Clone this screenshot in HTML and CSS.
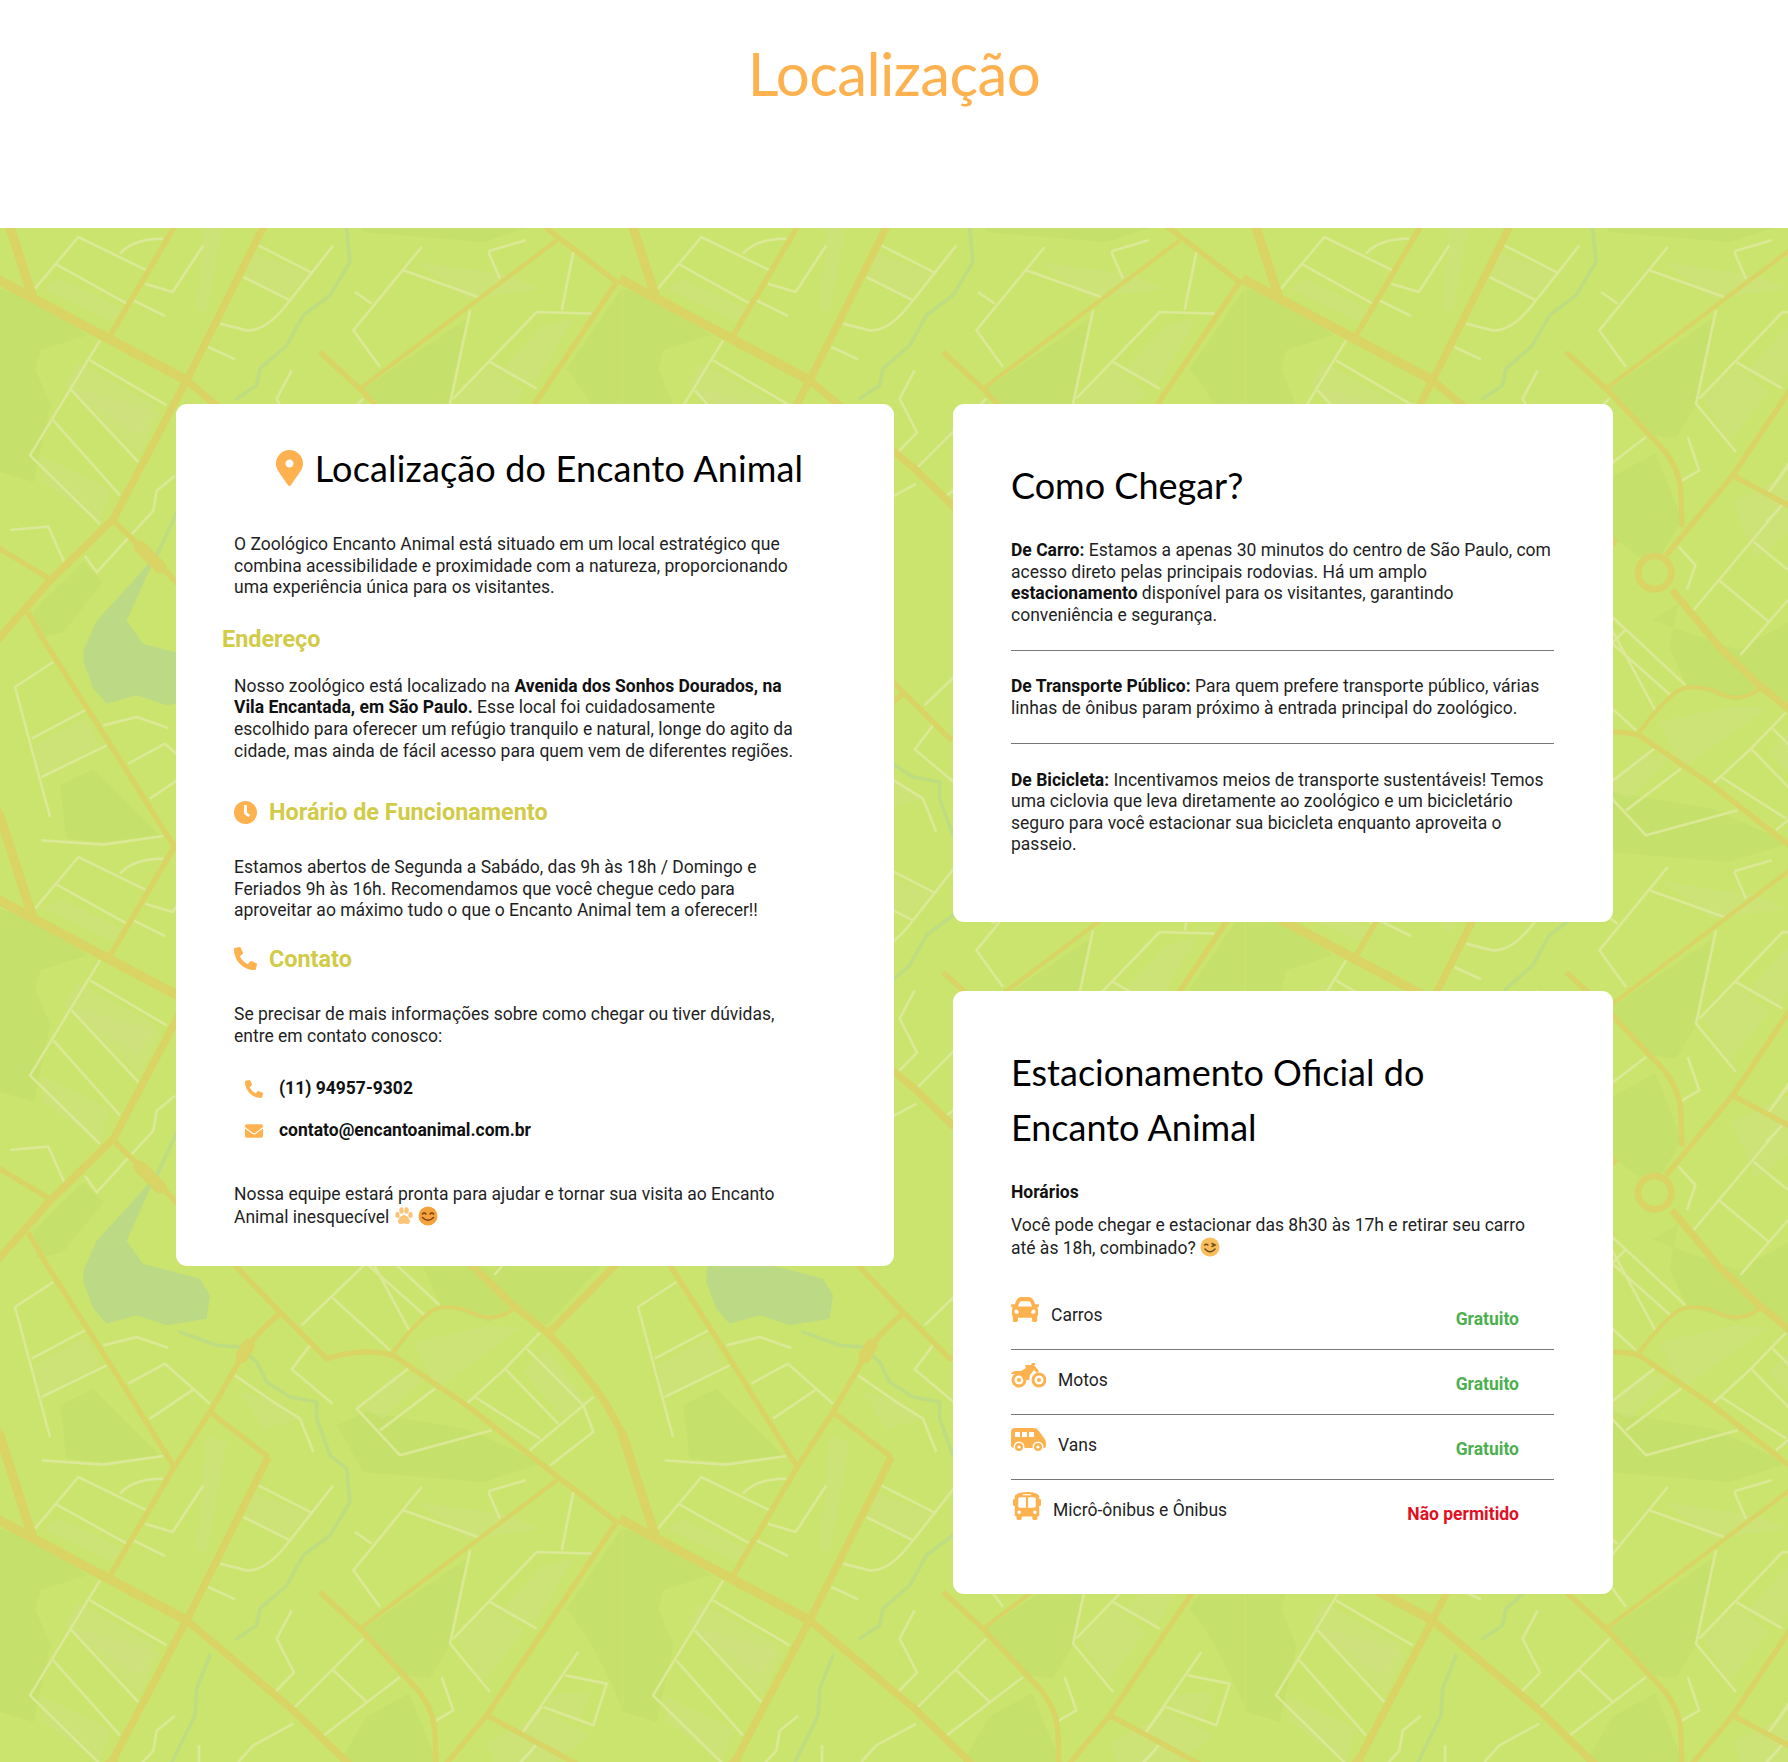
FILE: index.html
```html
<!DOCTYPE html>
<html lang="pt-BR">
<head>
<meta charset="utf-8">
<title>Localização</title>
<link rel="stylesheet" href="styles.css">
</head>
<body>
<header class="page-head"><h1>Localização</h1></header>
<main class="map-section">
<svg class="map" aria-hidden="true" width="100%" height="100%">
<defs>
<g id="parks">
<path class="park" d="M180 430L280 380L480 580L310 600L200 590Z"/>
<path class="park" d="M1700 1040L1865 800L1990 830L2130 940L1990 985L1975 1040L2020 1150L1970 1380L1870 1350Q1790 1150 1700 1040Z"/>
<path class="park" d="M1010 490L1100 450L1400 500L1600 590L1640 600L1450 660L1090 630Z"/>
<path class="park" d="M1090 1100L1400 890L1350 1150L1290 1250L1210 1240Z"/>
<path class="park" d="M1218 -66L1298 -116L1270 15L1320 130L1470 180L1540 130L1640 190L1800 15L1700 -100L1478 24Z"/>
<path class="park" d="M1020 1500L1098 1364L1228 1294L1308 1494L1248 1594L1178 1604L1098 1544Z"/>
<path class="park" d="M100 1766L250 1620L310 1680L190 1830L110 1850Z"/>
<path class="pale" d="M620 520L680 540L620 870L590 860Z"/>
<path class="pale" d="M100 310L255 225L300 310L125 400Z"/>
<path class="pale" d="M180 770L370 860L340 900L130 800Z"/>
<path class="pale" d="M230 1100L480 1170L420 1300L220 1120Z"/>
<path class="pale" d="M120 1300L330 1400L300 1500L130 1380Z"/>
<path class="pale" d="M1180 340L1280 340L1150 470L1090 440Z"/>
<path class="pale" d="M1240 240L1470 190L1560 200L1310 380Z"/>
<path class="pale" d="M1530 760L1620 800L1400 830L1250 720Z"/>
<path class="pale" d="M1500 1050L1630 910L1720 890L1600 1090Z"/>
<path class="pale" d="M1370 1130L1470 1030L1570 1110L1450 1260Z"/>
<path class="pale" d="M1640 260L1760 420L1690 470L1570 330Z"/>
<path class="pale" d="M2100 1020L2340 1150L2280 1240L2060 1090Z"/>
<path class="pale" d="M1460 1440L1640 1350L1770 1420L1530 1610Z"/>
<path class="pale" d="M760 690L930 755L850 830L735 770Z"/>
<path class="pale" d="M1640 1300L1770 1290L1740 1380L1650 1350Z"/>
<path class="pale" d="M820 410L900 470L790 500L720 390Z"/>
<path class="lake" d="M470 -264L400 -184L290 -64L250 26L250 60L280 140L320 185L410 160L500 190L620 170L630 100L600 50L528 31L430 6L380 -64Z"/>
<path class="stream" d="M540 210L650 250L720 255L770 300L800 360L870 405L950 420L950 470L990 580L1040 620L1050 720L990 820L910 880L860 970L780 1040L770 1090L710 1130"/>
<path class="stream" d="M630 1180L590 1280L585 1360L528 1476L470 1600"/>
<path class="seam" d="M1867 770V1350"/>
</g>
<g id="lights">
<path class="lane" d="M160 60L45 135L150 525M95 290L255 205M125 405L320 310M310 250L410 225L505 258M385 365L495 305L630 425M450 470L580 382M125 595L310 608L490 582M105 800L235 645L440 745M165 725L380 845M400 835L495 882M360 695Q400 650 490 650M610 670L518 810L435 785"/>
<path class="lane" d="M300 955L90 1300L300 1506M270 1015L500 1150M215 1105L415 1320M160 1195L360 1420M775 670L940 755M1000 670L870 835Q800 930 740 925L660 905M730 765L870 835M625 975L705 1012M705 340L820 420L900 470L940 570M930 250L875 322L998 425"/>
<path class="lane" d="M905 190L1098 4L1138 -36M995 105L1170 265M1098 4L1273 159M1098 -76L1318 129M1020 -180L1228 205M1225 320L1070 440L1200 580L1475 505M1305 380L1140 505M1265 675L1060 925L1140 1035M1210 745L1435 825M1065 810L1115 845M875 1045L830 1130L882 1232L825 1290M1090 1130L880 1340M1000 1225L1100 1320M1200 1245L965 1425M1325 1245L1360 1345L1300 1380"/>
<path class="lane" d="M1410 865L1350 1145L1470 1290M1360 1130L1610 870L1775 875M1470 1020L1610 1100M1720 690L1685 865M1465 690L1500 770M1465 688L1577 655M1400 425L1515 320L1620 212M1425 405L1620 530M1515 320L1675 485M1580 260L1750 430M1590 565L1780 405M1750 430L1780 510L1650 610M1735 1170L1565 1415M1695 1240L1820 1265L1780 1390L1630 1335M1600 1460L1560 1500"/>
<path class="lane" d="M525 1361L470 1406L460 1466L290 1651L255 1601M597 1450V1560M880 1385L760 1450L715 1500M30 1524L145 1514L195 1626M1626 1334L1573 1404M1608 1449L1343 1764M1523 1559L1626 1644M1418 1674L1568 1799M1626 1734L1483 1899M1298 1574L1348 1629L1323 1704"/>
</g>
<g id="roads">
<path class="road r-wide" d="M-10 770L100 830L325 950L560 1075"/>
<path class="road r-big" d="M560 1075L880 1345L1040 1500L1110 1565"/>
<path class="road r-mid" d="M85 -89L135 0L320 290L520 610"/>
<path class="road r-big" d="M1278 -156L1420 15L1540 130L1640 210Q1750 320 1820 430L1865 510"/>
<path class="road r-wide" d="M1865 510L1965 820"/>
<path class="road r-mid" d="M840 155Q780 205 745 250L630 450L520 620L325 950"/>
<path class="road r-blob" d="M745 250L725 285"/>
<path class="road r-mid" d="M335 -369L490 -220L710 15L840 150L980 290Q1090 255 1180 280L1400 430L1680 650L1850 780L1460 1360L1260 1600"/>
<path class="road r-blob" d="M420 -285L480 -225"/>
<path class="road r-mid" d="M630 450L805 585"/>
<path class="road r-big" d="M805 585L560 1075L340 1491L150 1676L0 1846L-219 2070"/>
<path class="road r-mid" d="M960 990L1080 1100L1250 1280Q1300 1340 1305 1410L1308 1514"/>
<path class="road r-thin" d="M1080 1100L1670 655"/>
<path class="road r-thin" d="M1180 270Q1240 190 1290 150Q1330 125 1400 145Q1480 190 1540 140"/>
<path class="road r-mid" d="M1460 1360L1869 1581L2019 1671"/>
<circle class="road r-ring" cx="1226" cy="1652" r="50"/>
</g>
<pattern id="tile" x="0" y="414" width="623" height="620" patternUnits="userSpaceOnUse" viewBox="0 0 1869 1860">
<rect class="ground" width="1869" height="1860"/>
<use href="#parks"/><use href="#parks" x="-1869"/><use href="#parks" x="1869"/><use href="#parks" y="1860"/><use href="#parks" y="-1860"/><use href="#parks" x="-1869" y="1860"/><use href="#parks" x="-1869" y="-1860"/><use href="#parks" x="1869" y="1860"/><use href="#parks" x="1869" y="-1860"/>
<use href="#lights"/><use href="#lights" x="-1869"/><use href="#lights" x="1869"/><use href="#lights" y="1860"/><use href="#lights" y="-1860"/><use href="#lights" x="-1869" y="1860"/><use href="#lights" x="-1869" y="-1860"/><use href="#lights" x="1869" y="1860"/><use href="#lights" x="1869" y="-1860"/>
<use href="#roads"/><use href="#roads" x="-1869"/><use href="#roads" x="1869"/><use href="#roads" y="1860"/><use href="#roads" y="-1860"/><use href="#roads" x="-1869" y="1860"/><use href="#roads" x="-1869" y="-1860"/><use href="#roads" x="1869" y="1860"/><use href="#roads" x="1869" y="-1860"/>
</pattern>
</defs>
<rect width="100%" height="100%" fill="url(#tile)"/>
</svg>
<div class="columns">
<article class="card card-main">
<h2 class="title-center"><svg class="ico ico-pin" viewBox="0 0 384 512"><path fill-rule="evenodd" d="M172.268 501.67C26.97 291.031 0 262.425 0 192 0 85.961 85.961 0 192 0s192 85.961 192 192c0 70.425-26.97 99.031-172.268 309.67-9.535 13.774-29.93 13.773-39.464 0zM192 250c32 0 58-26 58-58s-26-58-58-58-58 26-58 58 26 58 58 58z"/></svg>Localização do Encanto Animal</h2>
<p class="m-intro">O Zoológico Encanto Animal está situado em um local estratégico que combina acessibilidade e proximidade com a natureza, proporcionando uma experiência única para os visitantes.</p>
<h3 class="sub sub-out">Endereço</h3>
<p class="m-addr">Nosso zoológico está localizado na <strong>Avenida dos Sonhos Dourados, na Vila Encantada, em São Paulo.</strong> Esse local foi cuidadosamente escolhido para oferecer um refúgio tranquilo e natural, longe do agito da cidade, mas ainda de fácil acesso para quem vem de diferentes regiões.</p>
<h3 class="sub sub-hours"><svg class="ico ico-sub" viewBox="8 8 496 496"><path d="M256,8C119,8,8,119,8,256S119,504,256,504,504,393,504,256,393,8,256,8Zm92.49,313h0l-20,25a16,16,0,0,1-22.49,2.5h0l-67-49.72a40,40,0,0,1-15-31.23V112a16,16,0,0,1,16-16h32a16,16,0,0,1,16,16V256l58,42.5A16,16,0,0,1,348.49,321Z"/></svg>Horário de Funcionamento</h3>
<p class="m-hours">Estamos abertos de Segunda a Sabádo, das 9h às 18h / Domingo e Feriados 9h às 16h. Recomendamos que você chegue cedo para aproveitar ao máximo tudo o que o Encanto Animal tem a oferecer!!</p>
<h3 class="sub sub-contact"><svg class="ico ico-sub" viewBox="0 0 512 512"><path d="M497.39 361.8l-112-48a24 24 0 0 0-28 6.9l-49.6 60.6A370.66 370.66 0 0 1 130.6 204.11l60.6-49.6a23.94 23.94 0 0 0 6.9-28l-48-112A24.16 24.16 0 0 0 122.6.61l-104 24A24 24 0 0 0 0 48c0 256.5 207.9 464 464 464a24 24 0 0 0 23.4-18.6l24-104a24.29 24.29 0 0 0-14.01-27.6z"/></svg>Contato</h3>
<p class="m-ask">Se precisar de mais informações sobre como chegar ou tiver dúvidas, entre em contato conosco:</p>
<ul class="contacts">
<li><svg class="ico ico-c" viewBox="0 0 512 512"><path d="M497.39 361.8l-112-48a24 24 0 0 0-28 6.9l-49.6 60.6A370.66 370.66 0 0 1 130.6 204.11l60.6-49.6a23.94 23.94 0 0 0 6.9-28l-48-112A24.16 24.16 0 0 0 122.6.61l-104 24A24 24 0 0 0 0 48c0 256.5 207.9 464 464 464a24 24 0 0 0 23.4-18.6l24-104a24.29 24.29 0 0 0-14.01-27.6z"/></svg><strong>(11) 94957-9302</strong></li>
<li><svg class="ico ico-c" viewBox="0 64 512 384"><path d="M502.3 190.8c3.9-3.1 9.7-.2 9.7 4.7V400c0 26.5-21.5 48-48 48H48c-26.5 0-48-21.5-48-48V195.6c0-5 5.7-7.8 9.7-4.7 22.4 17.4 52.1 39.5 154.1 113.6 21.1 15.4 56.7 47.8 92.2 47.6 35.7.3 72-32.8 92.3-47.6 102-74.1 131.6-96.3 154-113.7zM256 320c23.2.4 56.6-29.2 73.4-41.4 132.7-96.3 142.8-104.7 173.4-128.7 5.8-4.5 9.2-11.5 9.2-18.9v-19c0-26.5-21.5-48-48-48H48C21.5 64 0 85.5 0 112v19c0 7.4 3.4 14.3 9.2 18.9 30.6 23.9 40.7 32.4 173.4 128.7 16.8 12.2 50.2 41.8 73.4 41.4z"/></svg><strong>contato@encantoanimal.com.br</strong></li>
</ul>
<p class="m-end">Nossa equipe estará pronta para ajudar e tornar sua visita ao Encanto Animal inesquecível <svg class="emoji" viewBox="0 0 20 20"><g class="paw"><ellipse cx="3.5" cy="9" rx="2.2" ry="2.9"/><ellipse cx="7.5" cy="4.5" rx="2.2" ry="3.2"/><ellipse cx="12.5" cy="4.5" rx="2.2" ry="3.2"/><ellipse cx="16.5" cy="9" rx="2.2" ry="2.9"/><path d="M10 9c3 0 6 4 6 6.500 0 3-3.500 2.500-6 2-2.500.500-6 1-6-2C4 13 7 9 10 9z"/></g></svg> <svg class="emoji" viewBox="0 0 20 20"><circle class="face" cx="10" cy="10" r="9.500"/><path class="feat" d="M4.500 8q1.700-2 3.400 0M12.100 8q1.700-2 3.400 0M4.500 11.500q5.500 5.500 11 0"/></svg></p>
</article>
<div class="stack">
<article class="card card-way">
<h2>Como Chegar?</h2>
<p class="w-first"><strong>De Carro:</strong> Estamos a apenas 30 minutos do centro de São Paulo, com acesso direto pelas principais rodovias. Há um amplo <strong>estacionamento</strong> disponível para os visitantes, garantindo conveniência e segurança.</p>
<hr>
<p><strong>De Transporte Público:</strong> Para quem prefere transporte público, várias linhas de ônibus param próximo à entrada principal do zoológico.</p>
<hr>
<p><strong>De Bicicleta:</strong> Incentivamos meios de transporte sustentáveis! Temos uma ciclovia que leva diretamente ao zoológico e um bicicletário seguro para você estacionar sua bicicleta enquanto aproveita o passeio.</p>
</article>
<article class="card card-park">
<h2>Estacionamento Oficial do Encanto Animal</h2>
<h4>Horários</h4>
<p class="p-note">Você pode chegar e estacionar das 8h30 às 17h e retirar seu carro até às 18h, combinado? <svg class="emoji" viewBox="0 0 20 20"><circle class="face face-wink" cx="10" cy="10" r="9.500"/><path class="feat feat-dark" d="M4.500 8q1.700-1.500 3.400 0M12 6.500l3 1.500-3 1.500M5 12q5 5.500 10 0"/></svg></p>
<ul class="prices">
<li><span class="veh"><svg class="ico v-car" viewBox="0 64 512 384" preserveAspectRatio="none"><path fill-rule="evenodd" d="M499.99 176h-59.87l-16.64-41.6C406.38 91.63 365.57 64 319.5 64h-127c-46.06 0-86.88 27.63-103.99 70.4L71.87 176H12.01C4.2 176-1.53 183.34.37 190.91l6 24C7.7 220.25 12.5 224 18.01 224h20.07C24.65 235.73 16 252.78 16 272v48c0 16.12 6.16 30.67 16 41.93V416c0 17.67 14.33 32 32 32h32c17.67 0 32-14.33 32-32v-32h256v32c0 17.67 14.33 32 32 32h32c17.67 0 32-14.33 32-32v-54.07c9.84-11.25 16-25.8 16-41.93v-48c0-19.22-8.65-36.27-22.07-48H494c5.51 0 10.31-3.75 11.64-9.09l6-24c1.89-7.57-3.84-14.91-11.65-14.91zm-352.06-17.83c7.29-18.22 24.94-30.17 44.57-30.17h127c19.63 0 37.28 11.95 44.57 30.17L384 208H128l19.93-49.83zM96 319.8c-19.2 0-32-12.76-32-31.9S76.8 256 96 256s48 28.71 48 47.85-28.8 15.95-48 15.95zm320 0c-19.2 0-48 3.19-48-15.95S396.8 256 416 256s32 12.76 32 31.9-12.8 31.9-32 31.9z"/></svg><span class="lab">Carros</span></span><span class="price free">Gratuito</span></li>
<li><span class="veh"><svg class="ico v-wide" viewBox="0 0 35 26"><path d="M14 3h6l1-2h3v2h-1l5 6-2 2-3-3-4 5-1 5h-6q-1-5-5-6H0q1-3 5-3h5l5-3z"/><circle class="wheel" cx="8" cy="18" r="6"/><circle class="wheel" cx="28" cy="18" r="6"/><circle cx="8" cy="18" r="2"/><circle cx="28" cy="18" r="2"/></svg><span class="lab">Motos</span></span><span class="price free">Gratuito</span></li>
<li><span class="veh"><svg class="ico v-wide" viewBox="0 0 35 26"><path fill-rule="evenodd" d="M4 1H23Q26 1 28 4L33 11Q35 13 35 16V19Q35 21 33 21H3Q0 21 0 18V5Q0 1 4 1ZM4 5V10H9V5ZM11 5V10H16V5ZM18 5V10H23V5Z"/><circle class="hub" cx="8" cy="20" r="5.500"/><circle class="hub" cx="27" cy="20" r="5.500"/><circle cx="8" cy="20" r="4"/><circle cx="27" cy="20" r="4"/><circle class="dot" cx="8" cy="20" r="1.600"/><circle class="dot" cx="27" cy="20" r="1.600"/></svg><span class="lab">Vans</span></span><span class="price free">Gratuito</span></li>
<li><span class="veh"><svg class="ico v-bus" viewBox="0 0 512 512"><path d="M488 128h-8V80c0-44.800-99.200-80-224-80S32 35.200 32 80v48h-8c-13.250 0-24 10.740-24 24v80c0 13.250 10.750 24 24 24h8v160c0 17.670 14.330 32 32 32v32c0 17.670 14.330 32 32 32h32c17.670 0 32-14.330 32-32v-32h192v32c0 17.670 14.330 32 32 32h32c17.670 0 32-14.330 32-32v-32h6.400c16 0 25.600-12.800 25.600-25.600V256h8c13.250 0 24-10.750 24-24v-80c0-13.260-10.750-24-24-24zM112 400c-17.670 0-32-14.330-32-32s14.330-32 32-32 32 14.330 32 32-14.330 32-32 32zm16-112c-17.670 0-32-14.330-32-32V128c0-17.670 14.330-32 32-32h256c17.670 0 32 14.330 32 32v128c0 17.670-14.330 32-32 32H128zm272 112c-17.670 0-32-14.330-32-32s14.330-32 32-32 32 14.330 32 32-14.330 32-32 32z"/><rect x="236" y="90" width="40" height="200"/><rect x="180" y="40" width="152" height="20" class="hub"/></svg><span class="lab">Micrô-ônibus e Ônibus</span></span><span class="price banned">Não permitido</span></li>
</ul>
</article>
</div>
</div>
</main>
</body>
</html>
```
FILE: styles.css
```css
* { box-sizing: border-box; }
html, body { margin: 0; padding: 0; }
body { background: #fff; color: #1f1f1f; font-family: Roboto, "Liberation Sans", sans-serif; font-size: 17.5px; line-height: 21.6px; }
p, ul, h1, h2, h3, h4 { margin: 0; padding: 0; }
ul { list-style: none; }
strong { font-weight: 700; color: #111; }

.page-head { height: 228px; padding-top: 37px; text-align: center; }
h1 { font-family: Lato, sans-serif; font-weight: 400; font-size: 60px; line-height: 72px; color: #fdb24f; letter-spacing: -0.6px; }

.map-section { position: relative; height: 1534px; padding-top: 176px; overflow: hidden; }
.map { position: absolute; inset: 0; display: block; }
.columns { position: relative; display: grid; grid-template-columns: 718px 660px; column-gap: 59px; width: 1437px; margin-left: 176px; align-items: start; }
.stack { display: flex; flex-direction: column; gap: 69px; }
.card { background: #fff; border-radius: 11px; padding: 54px 59px 54px 58px; }

.ground { fill: #cbe46d; }
.park { fill: #c5e16c; }
.pale { fill: #d0e084; opacity: .45; }
.lake { fill: #bcda85; }
.stream { fill: none; stroke: #bedd80; stroke-width: 11; stroke-linejoin: round; stroke-linecap: round; }
.seam { fill: none; stroke: #cde370; stroke-width: 3; }
.lane { fill: none; stroke: #dbe896; stroke-width: 8; stroke-linejoin: round; }
.road { fill: none; stroke: #d9d463; stroke-linejoin: round; }
.r-thin { stroke-width: 12; }
.r-mid { stroke-width: 16; }
.r-big { stroke-width: 22; }
.r-wide { stroke-width: 28; }
.r-blob { stroke-width: 38; stroke-linecap: round; }
.r-ring { stroke-width: 20; }

h2 { font-family: Lato, sans-serif; font-weight: 400; font-size: 36px; line-height: 55px; color: #000; }
.title-center { display: flex; align-items: center; justify-content: center; height: 48px; line-height: 48px; gap: 12px; margin-left: 9px; letter-spacing: .15px; }
.ico { display: block; fill: #fdb24f; flex: none; }
.ico-pin { width: 27px; height: 36px; }
.ico-sub { width: 23px; height: 23px; }
.ico-c { width: 18px; height: 18px; }

.card-main { padding: 40px 58px 37px; }
.card-main p { max-width: 560px; }
.m-intro { margin-top: 42px; }
.sub { font-size: 23.4px; line-height: 26px; font-weight: 700; color: #d1cb47; display: flex; align-items: center; gap: 12px; }
.sub-out { margin: 27px 0 0 -12px; }
.m-addr { margin-top: 24px; }
.sub-hours { margin-top: 37px; }
.m-hours { margin-top: 32px; }
.sub-contact { margin-top: 24px; }
.m-ask { margin-top: 32px; }
.contacts { margin: 29px 0 0 11px; display: flex; flex-direction: column; gap: 16px; }
.contacts li { display: flex; align-items: center; gap: 16px; height: 26px; }
.m-end { margin-top: 39px; line-height: 23px; }
.emoji { display: inline-block; width: 20px; height: 20px; vertical-align: -3px; }
.paw { fill: #fbc477; }
.face { fill: #f5a23c; }
.face-wink { fill: #f9bd5c; }
.feat { fill: none; stroke: #7a3f0c; stroke-width: 1.500; stroke-linecap: round; }
.feat-dark { stroke: #6b4a16; }

.w-first { margin-top: 27px; }
hr { border: 0; border-top: 1px solid #777; margin: 23.5px 0 25.5px; }
.card-way { padding-bottom: 66px; }

.card-park { padding-bottom: 49px; }
h4 { margin-top: 27.5px; font-size: 17.5px; line-height: 20px; font-weight: 700; color: #111; }
.p-note { margin-top: 12px; max-width: 530px; line-height: 23px; }
.prices { margin-top: 24.5px; }
.prices li { display: flex; justify-content: space-between; align-items: flex-start; height: 65px; padding: 12px 35px 0 0; border-bottom: 1px solid #777; }
.prices li:last-child { border-bottom: 0; }
.veh { display: flex; align-items: flex-start; gap: 12px; }
.lab { padding-top: 8px; line-height: 20px; }
.price { padding-top: 12px; line-height: 20px; font-weight: 700; }
.free { color: #4caf50; }
.banned { color: #e2101f; }
.v-car { width: 28px; height: 25px; }
.v-wide { width: 35px; height: 26px; }
.v-bus { width: 28px; height: 28px; margin-left: 2px; }
.wheel { fill: none; stroke: #fdb24f; stroke-width: 3; }
.hub { fill: #fff; }
.dot { fill: #fff; }
```
